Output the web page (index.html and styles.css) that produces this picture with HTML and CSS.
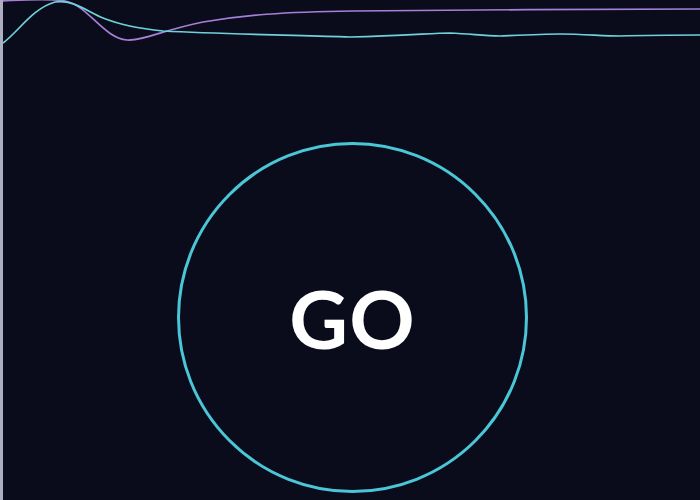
FILE: index.html
```html
<!DOCTYPE html>
<html>
<head>
<meta charset="utf-8">
<link rel="stylesheet" href="styles.css">
</head>
<body>
<div class="screen">
  <svg class="chart" viewBox="0 0 697 50" width="697" height="50">
    <path class="line purple" d="M-3 1 C 20 0, 45 -2, 62 1 C 85 5, 100 38, 124 40 C 140 41, 160 30, 200 22 C 240 15, 280 12, 350 11 C 450 10, 600 9, 700 9"/>
    <path class="line cyan" d="M0 43 C 15 32, 30 8, 52 2 C 70 -1, 85 12, 100 18 C 120 26, 140 29, 160 31 C 220 34, 280 35, 347 37 C 400 36, 430 33, 447 33 C 470 34, 480 36, 497 36 C 520 35, 540 34, 557 34 C 580 34, 600 36, 617 36 C 650 35, 680 35, 700 35"/>
  </svg>
  <div class="stage">
    <button class="go">GO</button>
  </div>
</div>
</body>
</html>
```
FILE: styles.css
```css
html, body {
  margin: 0;
  padding: 0;
  background: #0b0c1b;
}
.screen {
  width: 697px;
  height: 500px;
  border-left: 3px solid #aeaec2;
  background: #0b0c1b;
  display: flex;
  flex-direction: column;
  overflow: hidden;
}
.chart {
  display: block;
  overflow: visible;
}
.line {
  fill: none;
  stroke-width: 1.7;
}
.purple { stroke: #a67fd8; }
.cyan { stroke: #6fd2da; }
.stage {
  display: flex;
  justify-content: center;
  padding-top: 92px;
}
.go {
  width: 351px;
  height: 351px;
  border-radius: 50%;
  border: 3px solid #4ac6d6;
  background: transparent;
  color: #ffffff;
  font-family: "Lato", "Open Sans", sans-serif;
  font-weight: 700;
  font-size: 81px;
  letter-spacing: 1px;
  padding: 0;
  margin-left: 2px;
  line-height: 1;
}
```
